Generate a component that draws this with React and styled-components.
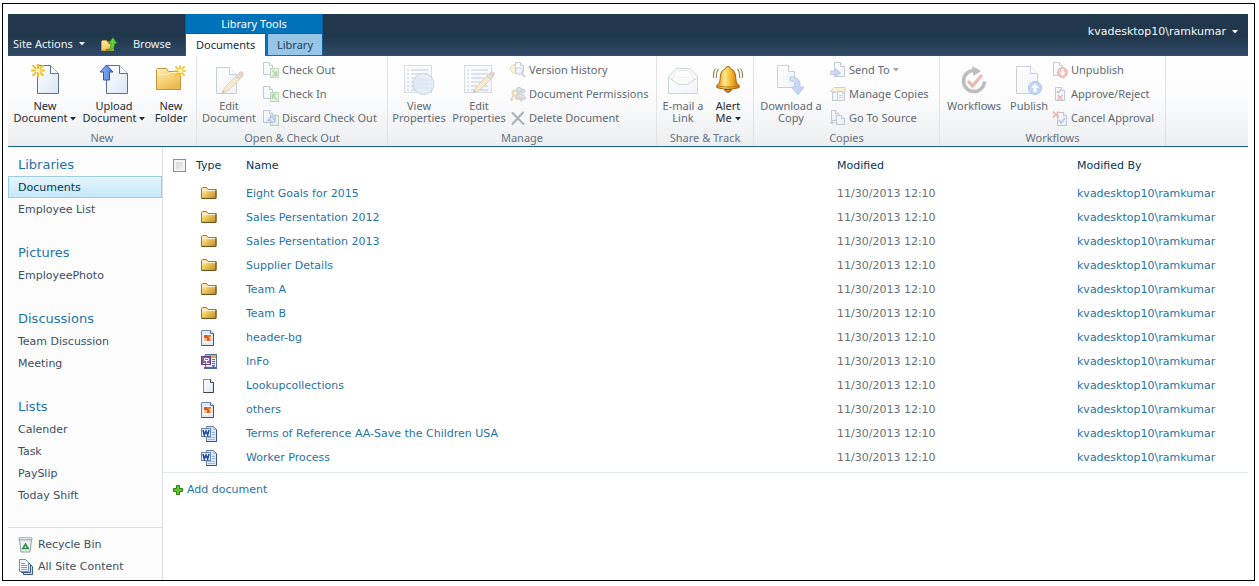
import React from "react";
import styled, { createGlobalStyle } from "styled-components";

const Global = createGlobalStyle`
  *, *::before, *::after { box-sizing: border-box; }
  body { margin: 0; background: #fff; font: 11px/22px Verdana, "DejaVu Sans", sans-serif; color: #3b4f65; }
  button { font: inherit; color: inherit; background: none; border: 0; padding: 0; margin: 0; cursor: pointer; }
  a { color: inherit; text-decoration: none; }
  a:hover { text-decoration: underline; }
  svg { display: block; flex: none; }
`;

const ribbonFont = `"Segoe UI", "Noto Sans", sans-serif`;

const Frame = styled.div`
  min-height: calc(100vh - 8px);
  margin: 3px 4px 5px 2px;
  padding: 10px 6px 0 5px;
  border: 1px solid #000;
  display: flex;
  flex-direction: column;
`;

const TopBar = styled.header`
  height: 42px;
  display: flex;
  align-items: flex-end;
  background: linear-gradient(#21374c 0%, #21374c 55%, #2f4a66 100%);
  border-bottom: 1px solid #1c5378;
  color: #fff;
  font-family: ${ribbonFont};
`;

const BarButtons = styled.div`
  flex: 0 0 168px;
  display: flex;
  align-items: center;
  justify-content: space-between;
`;

const BarButton = styled.button`
  height: 22px;
  padding: 0 5px;
  display: flex;
  align-items: center;
  gap: 6px;
  color: #eef2f6;
  white-space: nowrap;
`;

const ToolTabs = styled.div`
  width: 138px;
  margin: 0 0 -1px 9px;
  border: 1px solid #0b5c9a;
  border-width: 0 1px;
  align-self: stretch;
  background: #0072bc;
`;

const ToolTitle = styled.div`
  height: 20px;
  line-height: 19px;
  text-align: center;
  border-bottom: 1px solid #0a5d9b;
`;

const TabRow = styled.div`
  display: flex;
  justify-content: space-between;
  height: 22px;
`;

const Tab = styled.button`
  padding: 0 ${(p) => (p.$active ? 10 : 9)}px;
  height: ${(p) => (p.$active ? 22 : 21)}px;
  background: ${(p) => (p.$active ? "#fff" : "#97c5e6")};
  color: ${(p) => (p.$active ? "#1a2a3a" : "#22405c")};
`;

const UserMenu = styled.button`
  margin-left: auto;
  padding-right: 10px;
  align-self: stretch;
  height: 36px;
  display: flex;
  align-items: center;
  gap: 6px;
  color: #f4f7fa;
  font-family: Verdana, "DejaVu Sans", sans-serif;
`;

const Ribbon = styled.div`
  height: 91px;
  display: flex;
  background: linear-gradient(#fff 0%, #fcfcfd 45%, #eceef0 100%);
  border-bottom: 1px solid #17608d;
  font: 11px/12px ${ribbonFont};
`;

const Group = styled.section`
  flex: 0 0 ${(p) => p.$width}px;
  display: flex;
  flex-direction: column;
  padding-top: 2px;
  border-right: 1px solid #e0e3e6;
`;

const GroupBody = styled.div`
  display: flex;
  height: 72px;
`;

const GroupTitle = styled.div`
  text-align: center;
  line-height: 15px;
  color: #65717d;
`;

const BigButton = styled.button`
  flex: 0 0 ${(p) => p.$width}px;
  display: flex;
  flex-direction: column;
  align-items: center;
  justify-content: flex-start;
  gap: 4px;
  padding-top: 6px;
  white-space: nowrap;
  color: ${(p) => (p.disabled ? "#5f6973" : "#1e2a36")};
`;

const SmallList = styled.div`
  display: flex;
  flex-direction: column;
  padding-left: 2px;
`;

const SmallButton = styled.button`
  height: 24px;
  display: flex;
  align-items: center;
  gap: 3px;
  white-space: nowrap;
  color: #5f6973;
`;

const Faded = styled.span`
  opacity: ${(p) => (p.$on ? 0.36 : 1)};
`;

const CaretSvg = styled.svg`
  display: inline-block;
  vertical-align: middle;
`;

const Main = styled.div`
  flex: 1;
  display: flex;
`;

const Sidebar = styled.nav`
  flex: 0 0 155px;
  padding-top: 6px;
  background: #fcfcfc;
  border-right: 1px solid #d9dfe3;
`;

const NavSection = styled.section`
  margin-bottom: 21px;
`;

const NavTitle = styled.h2`
  margin: 0;
  padding-left: 10px;
  font-size: 13px;
  line-height: 23px;
  font-weight: 400;
  color: #1f73ac;
`;

const NavLink = styled.a`
  display: block;
  height: 22px;
  padding: 1px 0 0 10px;
  line-height: 22px;
  ${(p) =>
    p.$selected &&
    `
    padding-left: 9px;
    line-height: 20px;
    border: 1px solid #a0cbe4;
    color: #003759;
    background: linear-gradient(#e6f5fc, #c6e8fa);
  `}
`;

const NavFooter = styled.div`
  padding: 6px 0 2px 10px;
  border-top: 1px solid #d9dfe3;
`;

const FooterLink = styled.a`
  display: flex;
  align-items: center;
  gap: 4px;
  height: 22px;
`;

const Content = styled.main`
  flex: 1;
`;

const Table = styled.table`
  width: 100%;
  table-layout: fixed;
  border-collapse: collapse;
  th, td { padding: 0; text-align: left; font-weight: 400; white-space: nowrap; }
  th { padding-top: 2px; }
  thead tr { height: 35px; color: #003759; }
  tbody tr { height: 24px; }
`;

const Col = styled.col`
  width: ${(p) => (p.$width ? `${p.$width}px` : "auto")};
`;

const TypeCell = styled.td`
  svg { margin-left: 5px; }
`;

const LinkCell = styled.td`
  color: #1f73ac;
`;

const DateCell = styled.td`
  color: #6c7073;
`;

const Check = styled.input`
  appearance: none;
  display: block;
  width: 13px;
  height: 13px;
  margin: 0 0 0 10px;
  border: 1px solid #8b8f94;
  background: linear-gradient(135deg, #cdd0d5, #f6f6f6);
  box-shadow: inset 0 0 0 2px #f4f4f4;
`;

const AddRow = styled.div`
  margin-top: 2px;
  padding: 6px 10px;
  border-top: 1px solid #e3e8eb;
`;

const AddLink = styled.a`
  display: inline-flex;
  align-items: center;
  gap: 4px;
  color: #1f73ac;
`;

const Caret = ({ color = "currentColor" }) => (
  <CaretSvg width="6" height="4" viewBox="0 0 6 4" aria-hidden="true">
    <path d="M0 0h6L3 3.5z" fill={color} />
  </CaretSvg>
);

const Svg = ({ size, children }) => (
  <svg width={size} height={size} viewBox={`0 0 ${size} ${size}`} fill="none" aria-hidden="true">
    {children}
  </svg>
);

const DefsSvg = styled.svg`
  position: absolute;
`;

const Gradients = () => (
  <DefsSvg width="0" height="0" aria-hidden="true">
    <defs>
      <linearGradient id="paper" x1="0" y1="0" x2="1" y2="1">
        <stop offset="0" stopColor="#fff" />
        <stop offset="1" stopColor="#d9e6f6" />
      </linearGradient>
      <linearGradient id="gold" x1="0" y1="0" x2="0.6" y2="1">
        <stop offset="0" stopColor="#fff0b0" />
        <stop offset="0.5" stopColor="#f9d67c" />
        <stop offset="1" stopColor="#eab94f" />
      </linearGradient>
      <linearGradient id="bell" x1="0" y1="0" x2="1" y2="0">
        <stop offset="0" stopColor="#d98a10" />
        <stop offset="0.35" stopColor="#ffe98a" />
        <stop offset="0.65" stopColor="#f6b52c" />
        <stop offset="1" stopColor="#b96a08" />
      </linearGradient>
      <linearGradient id="blue" x1="0" y1="0" x2="1" y2="0">
        <stop offset="0" stopColor="#8fb4f4" />
        <stop offset="1" stopColor="#4d7fe0" />
      </linearGradient>
      <linearGradient id="tray" x1="0" y1="0" x2="1" y2="1">
        <stop offset="0" stopColor="#fff6c8" />
        <stop offset="0.45" stopColor="#efc95c" />
        <stop offset="1" stopColor="#b88528" />
      </linearGradient>
    </defs>
  </DefsSvg>
);

const Star = ({ x, y, s = 1 }) => (
  <g transform={`translate(${x} ${y}) scale(${s})`} stroke="#f0c020" strokeWidth="2" strokeLinecap="round">
    <path d="M0-6V-3M0 3V6M-6 0h3M3 0H6M-4.8-4.8l2.400 2.400M2.400 2.400l2.400 2.400M4.800-4.800L2.400-2.400M-2.400 2.400l-2.400 2.400" />
    <circle r="2" fill="#fff3a8" stroke="none" />
  </g>
);

const Page = ({ x, y, w, h, c = 6, stroke = "#5a7394" }) => (
  <>
    <path d={`M${x} ${y}h${w - c}l${c} ${c}v${h - c}h${-w}z`} fill="url(#paper)" stroke={stroke} />
    <path d={`M${x + w - c} ${y}v${c}h${c}`} fill="#fff" stroke={stroke} />
  </>
);

const Pencil = () => (
  <g>
    <path d="M9 29l3-6L25 10l4 3-13 13z" fill="#f2c877" stroke="#a0753a" strokeWidth=".8" />
    <path d="M25 10l2-2c2-1 4 1 3 3l-1 2z" fill="#d8746c" stroke="#8d6a5a" strokeWidth=".7" />
    <path d="M23 12l4 3" stroke="#7c8894" strokeWidth="1.6" />
    <path d="M9 29l1.300-2.600 1.500 1.200z" fill="#444" />
  </g>
);

const FormPage = () => (
  <>
    <rect x="1.500" y="1.500" width="27" height="27" fill="url(#paper)" stroke="#93a5bf" />
    {[6, 10, 14, 18, 22, 26].map((y) => (
      <path key={y} d={`M4 ${y}h2M8 ${y}h17`} stroke="#5a6e9c" />
    ))}
  </>
);

const icons = {
  newDoc: (
    <Svg size={32}><Page x={8.5} y={1.5} w={21} h={28} c={8} /><Star x={9} y={6.5} /></Svg>
  ),
  upload: (
    <Svg size={32}>
      <Page x={8.5} y={1.5} w={21} h={28} c={8} />
      <path d="M8.500 1l6.500 7h-3.500v8h-6V8H2z" fill="url(#blue)" stroke="#2f55a5" />
    </Svg>
  ),
  newFolder: (
    <Svg size={32}>
      <path d="M1.500 25.500v-20l1-1h9l2 3h12v18z" fill="url(#gold)" stroke="#c4953c" />
      <path d="M2 10.500h11l2-2h11" stroke="#fff2c0" />
      <Star x={25} y={7} s={0.85} />
    </Svg>
  ),
  editDoc: <Svg size={32}><Page x={3.5} y={3.5} w={20} h={26} c={7} stroke="#6c7c90" /><Pencil /></Svg>,
  viewProps: (
    <Svg size={32}>
      <FormPage />
      <circle cx="20.500" cy="20" r="10.500" fill="#b9d2f2" fillOpacity=".85" stroke="#7c8ea8" />
      <path d="M12 16h17M11 20h19M12 24h17" stroke="#8fabdf" />
    </Svg>
  ),
  editProps: <Svg size={32}><FormPage /><g transform="translate(1 0)"><Pencil /></g></Svg>,
  mail: (
    <Svg size={32}>
      <path d="M1.500 12.500L9 4.500h14l7.500 8v17h-29z" fill="#eef4fb" stroke="#7a96b4" />
      <path d="M5 16l5-9.500h12L27 16l-8 6h-6z" fill="#fff" stroke="#d8cfa2" />
      <path d="M9 13.500h14M9 16h14" stroke="#f0e2a0" />
      <path d="M1.500 13.500L12 20.500h8l10.500-7v16h-29z" fill="url(#paper)" stroke="#7a96b4" />
    </Svg>
  ),
  bell: (
    <Svg size={32}>
      <path d="M16 2.500c1.800 0 2.300 1 2.300 2.200 4.200 1.200 5.200 4.600 5.500 9 .300 4.600 1.300 6.200 3.400 7.600v2.200c-6 2.200-16.400 2.200-22.400 0v-2.200c2.100-1.400 3.100-3 3.400-7.600.3-4.400 1.300-7.800 5.500-9 0-1.200.5-2.200 2.300-2.200z" fill="url(#bell)" stroke="#a56508" />
      <path d="M5 21.500c6 2 16 2 22 0" stroke="#b87610" />
      <path d="M12.500 25.500c.8 3.600 6.200 3.600 7 0z" fill="#d88b14" stroke="#8b5106" />
      <path d="M6.500 5C4.500 7 4 10 4.500 14M3.500 4.500C1.500 7 1 10.500 1.800 14M25.500 5c2 2 2.500 5 2 9M28.500 4.500c2 2.500 2.500 6 1.700 9.500" stroke="#a88650" strokeWidth="1.200" />
    </Svg>
  ),
  download: (
    <Svg size={32}>
      <Page x={2.5} y={1.5} w={17} h={22} c={6} stroke="#6c83a4" />
      <path d="M15 13c8-1 10.500 4 10 10h4l-6 8-6.500-8h4c.500-4-1.500-6-5.500-6z" fill="url(#blue)" stroke="#4d6fb5" />
    </Svg>
  ),
  workflow: (
    <Svg size={32}>
      <path d="M17 6.500a10.500 10.500 0 1 0 9.500 11" stroke="#4a4e54" strokeWidth="3.600" />
      <path d="M14 2l9 5-7.500 5z" fill="#4a4e54" />
      <path d="M10 17l4.500 5L24 11" stroke="#dc3c30" strokeWidth="3.200" />
    </Svg>
  ),
  publish: (
    <Svg size={32}>
      <Page x={3.5} y={2.5} w={21} h={27} c={7} stroke="#6c83a4" />
      <circle cx="22" cy="24" r="6.500" fill="#5798e6" stroke="#2e62ae" />
      <path d="M22 19.500l4 4.500h-2.500v4h-3v-4H18z" fill="#fff" />
    </Svg>
  ),
  checkOut: (
    <Svg size={16}>
      <Page x={0.5} y={0.5} w={9} h={12} c={3} />
      <rect x="7.500" y="6.500" width="8" height="9" fill="#bde6b2" stroke="#4b9c46" />
      <path d="M9.500 8.500l4 4.500M13.500 9v4.500H9.500" stroke="#2f8d2b" strokeWidth="1.600" />
    </Svg>
  ),
  checkIn: (
    <Svg size={16}>
      <Page x={0.5} y={0.5} w={9} h={12} c={3} />
      <rect x="7.500" y="6.500" width="8" height="9" fill="#bde6b2" stroke="#4b9c46" />
      <path d="M13.500 13.500l-4-4.500M13.500 8.500H9.500V13" stroke="#2f8d2b" strokeWidth="1.600" />
    </Svg>
  ),
  discard: (
    <Svg size={16}>
      <Page x={0.5} y={0.5} w={9} h={12} c={3} />
      <rect x="7.500" y="5.500" width="8" height="10" fill="#cdeac6" stroke="#4b9c46" />
      <path d="M12 4.500v6c0 2.500-4 2.500-4.500 0H5L8.500 6l3 4" stroke="#4a7ed0" strokeWidth="1.600" />
    </Svg>
  ),
  version: (
    <Svg size={16}>
      <circle cx="5" cy="7" r="4.500" fill="#f6dd98" stroke="#b8913c" />
      <Page x={5.5} y={0.5} w={8} h={10} c={3} />
      <circle cx="9" cy="9" r="3.500" fill="#d6e6f8" fillOpacity=".8" stroke="#5b7aa6" />
      <path d="M11.500 11.500L15 15" stroke="#7a8797" strokeWidth="2" />
    </Svg>
  ),
  perms: (
    <Svg size={16}>
      <circle cx="9" cy="4" r="2.500" fill="#9db5cf" stroke="#55708f" />
      <circle cx="13" cy="5" r="2" fill="#9db5cf" stroke="#55708f" />
      <path d="M5.500 13c0-7 9-7 10 0z" fill="#9db5cf" stroke="#55708f" />
      <circle cx="5" cy="7" r="2.500" stroke="#bd932b" strokeWidth="1.800" />
      <path d="M4.500 9L1 13.500l1.500 1M8 10l3 5 1.500-1.500" stroke="#bd932b" strokeWidth="1.600" />
    </Svg>
  ),
  del: (
    <Svg size={16}>
      <path d="M2.500 3l11 11M13 2.500L2.500 14" stroke="#33383d" strokeWidth="2" strokeLinecap="round" />
    </Svg>
  ),
  sendTo: (
    <Svg size={16}>
      <Page x={4.5} y={0.5} w={10} h={14} c={4} />
      <path d="M.500 9h5V6.500l5 4.500-5 4v-2.500h-5z" fill="url(#blue)" stroke="#4467b4" strokeWidth=".8" />
    </Svg>
  ),
  manage: (
    <Svg size={16}>
      <path d="M.500 5.500L4 1.500h11v5l-4 1z" fill="url(#gold)" stroke="#b18a35" />
      <Page x={2.5} y={6.5} w={7} h={8} c={2} />
      <Page x={7.5} y={5.5} w={7} h={9} c={2} />
      <path d="M9 9.500h4M9 11.500h4" stroke="#6a86b0" />
    </Svg>
  ),
  source: (
    <Svg size={16}>
      <Page x={1.5} y={0.5} w={7} h={10} c={3} />
      <Page x={6.5} y={5.5} w={8} h={9} c={3} />
      <path d="M1 12.500h4M3 10.500l-2.500 2 2.500 2" stroke="#5878a8" />
    </Svg>
  ),
  unpublish: (
    <Svg size={16}>
      <Page x={1.5} y={0.5} w={9} h={13} c={3} />
      <circle cx="10.500" cy="10.500" r="5" fill="#e8604c" stroke="#b03a2a" />
      <path d="M10.500 14l-3-3.500h2V7h2v3.500h2z" fill="#fff" />
    </Svg>
  ),
  approve: (
    <Svg size={16}>
      <Page x={3.5} y={1.5} w={9} h={13} c={3} />
      <path d="M5 5l1.500 2L9 3.500" stroke="#3d6cc0" strokeWidth="1.300" />
      <path d="M5.500 9l5 5M10.500 9l-5 5" stroke="#dc3c30" strokeWidth="1.700" />
    </Svg>
  ),
  cancel: (
    <Svg size={16}>
      <Page x={5.5} y={2.5} w={9} h={13} c={3} />
      <path d="M7 10l2 3 4-5" stroke="#3d6cc0" strokeWidth="1.600" />
      <path d="M1 1.500l6 6M7 1.500l-6 6" stroke="#dc3c30" strokeWidth="1.700" />
    </Svg>
  ),
};

const fileIcons = {
  folder: (
    <Svg size={16}>
      <path d="M.500 12.500V2.500l1-1h4l1.500 2h8v9z" fill="url(#tray)" stroke="#9a7b35" />
      <path d="M1.500 4.500h13" stroke="#fff6cf" />
      <path d="M.500 12.500h14.500v-9" stroke="#6b541d" />
    </Svg>
  ),
  image: (
    <Svg size={16}>
      <path d="M.500.500h9l3 3v12h-12z" fill="#dfe8f6" stroke="#6d85b2" />
      <path d="M9.500.500v3h3" fill="#fff" stroke="#4b659a" />
      <path d="M2 4h9v9H2z" fill="#f3f5fa" />
      <path d="M3 5h3v3H3z" fill="#d9532a" />
      <path d="M6 5h4v2H6z" fill="#e9792f" />
      <path d="M3 8h3v3H3z" fill="#f6c48a" />
      <path d="M6 7h2v4H6z" fill="#d9532a" />
      <path d="M8 8h2v3H8z" fill="#f3a04a" />
      <path d="M.500 15.500h12v-12" stroke="#3f5688" />
    </Svg>
  ),
  infopath: (
    <Svg size={16}>
      <rect x="4.500" y=".500" width="11" height="14" fill="#e8eefa" stroke="#56719f" />
      <path d="M3 1h12v3H3z" fill="#f0a63a" />
      <path d="M11 5.500h3M11 7.500h3M11 9.500h3M11 11.500h3" stroke="#5572a8" />
      <rect x=".500" y="2.500" width="9" height="8" fill="#8a5ca0" stroke="#6a3f80" />
      <path d="M3.500 4.500h4v2h-4zM5.500 6.500v3h3M2 9.500h2" stroke="#fff" />
      <path d="M3 14h12.500M12.500 12v3" stroke="#4a66a4" strokeWidth="2" />
    </Svg>
  ),
  page: (
    <Svg size={16}>
      <path d="M2.500 1.500h7l3 3v10h-10z" fill="url(#paper)" stroke="#818892" />
      <path d="M9.500 1.500v3h3" fill="#fff" stroke="#3f454e" />
      <path d="M2.500 14.500h10v-10" stroke="#40464f" />
    </Svg>
  ),
  word: (
    <Svg size={16}>
      <path d="M5.500.500h7l3 3v12h-10z" fill="#dce8f9" stroke="#5f7cb2" />
      <path d="M12.500.500v3h3M11 6.500h3M11 8.500h3M7 11.500h7M7 13.500h7" stroke="#a0b5da" />
      <path d="M5 15.500h10.500v-12" stroke="#365494" />
      <rect x=".500" y="2.500" width="9" height="8" fill="#f3f7fd" stroke="#6584be" />
      <path d="M2 4l1.300 5L5 5l1.700 4L8 4" stroke="#254b98" strokeWidth="1.600" />
    </Svg>
  ),
};

const UpFolder = () => (
  <Svg size={16}>
    <path d="M.500 14.500V5.500l1-1h4l1 1.500h6v8.500z" fill="url(#gold)" stroke="#c79a3c" />
    <path d="M5 13.500c4 .500 5-2 5-6H7.500L12 1.500l4 6h-2.500c0 6-4 8-8.500 6z" fill="#63cf3a" stroke="#2c8c1c" strokeWidth=".8" />
  </Svg>
);

const BinIcon = () => (
  <Svg size={16}>
    <path d="M1.500 2.500h12l-1.500 12.500H3z" fill="#edf2f1" stroke="#8d9c9f" />
    <path d="M1 .800h13v2H1z" fill="#fff" stroke="#7d8d90" strokeWidth=".8" />
    <path d="M7.500 7l2.700 4.500H4.800z" fill="#cfe6d5" stroke="#318d4e" strokeWidth="1.500" />
  </Svg>
);

const PagesIcon = () => (
  <Svg size={16}>
    <path d="M5.500 4.500h6l3 3v8h-9z" fill="#cfdcf0" stroke="#3b5784" />
    <path d="M3.500 2.500h6l3 3v8h-9z" fill="#dfe9f7" stroke="#3b5784" />
    <path d="M1.500.500h6l3 3v9h-9z" fill="#f5f9fe" stroke="#6f8ab5" />
    <path d="M3 4.500h4M3 6.500h6M3 8.500h6M3 10.500h6" stroke="#7d9ac6" />
  </Svg>
);

const PlusIcon = () => (
  <Svg size={10}>
    <path d="M3.500.500h3v3h3v3h-3v3h-3v-3h-3v-3h3z" fill="#5fc92e" stroke="#2b8510" />
  </Svg>
);

const groups = [
  {
    title: "New", width: 189,
    big: [
      { icon: "newDoc", lines: ["New", "Document"], width: 74, menu: true },
      { icon: "upload", lines: ["Upload", "Document"], width: 64, menu: true },
      { icon: "newFolder", lines: ["New", "Folder"], width: 50 },
    ],
    small: [],
  },
  {
    title: "Open & Check Out", width: 191,
    big: [{ icon: "editDoc", lines: ["Edit", "Document"], width: 64, off: true }],
    small: [["checkOut", "Check Out"], ["checkIn", "Check In"], ["discard", "Discard Check Out"]],
  },
  {
    title: "Manage", width: 269,
    big: [
      { icon: "viewProps", lines: ["View", "Properties"], width: 62, off: true },
      { icon: "editProps", lines: ["Edit", "Properties"], width: 58, off: true },
    ],
    small: [["version", "Version History"], ["perms", "Document Permissions"], ["del", "Delete Document"]],
  },
  {
    title: "Share & Track", width: 97,
    big: [
      { icon: "mail", lines: ["E-mail a", "Link"], width: 52, off: true },
      { icon: "bell", lines: ["Alert", "Me"], width: 38, menu: true },
    ],
    small: [],
  },
  {
    title: "Copies", width: 186,
    big: [{ icon: "download", lines: ["Download a", "Copy"], width: 74, off: true }],
    small: [["sendTo", "Send To", true], ["manage", "Manage Copies"], ["source", "Go To Source"]],
  },
  {
    title: "Workflows", width: 226,
    big: [
      { icon: "workflow", lines: ["Workflows"], width: 68, off: true },
      { icon: "publish", lines: ["Publish"], width: 42, off: true },
    ],
    small: [["unpublish", "Unpublish"], ["approve", "Approve/Reject"], ["cancel", "Cancel Approval"]],
  },
];

const navigation = [
  ["Libraries", ["Documents", "Employee List"]],
  ["Pictures", ["EmployeePhoto"]],
  ["Discussions", ["Team Discussion", "Meeting"]],
  ["Lists", ["Calender", "Task", "PaySlip", "Today Shift"]],
];

const files = [
  ["folder", "Eight Goals for 2015"],
  ["folder", "Sales Persentation 2012"],
  ["folder", "Sales Persentation 2013"],
  ["folder", "Supplier Details"],
  ["folder", "Team A"],
  ["folder", "Team B"],
  ["image", "header-bg"],
  ["infopath", "InFo"],
  ["page", "Lookupcollections"],
  ["image", "others"],
  ["word", "Terms of Reference AA-Save the Children USA"],
  ["word", "Worker Process"],
];

const RibbonGroup = ({ title, width, big, small }) => (
  <Group $width={width} aria-label={title}>
    <GroupBody>
      {big.map((b) => (
        <BigButton key={b.icon} $width={b.width} disabled={b.off}>
          <Faded $on={b.off}>{icons[b.icon]}</Faded>
          <span>
            {b.lines[0]}
            {b.lines[1] && <br />}
            {b.lines[1]} {b.menu && <Caret />}
          </span>
        </BigButton>
      ))}
      {small.length > 0 && (
        <SmallList>
          {small.map(([icon, label, menu]) => (
            <SmallButton key={icon} disabled>
              <Faded $on>{icons[icon]}</Faded>
              {label}
              {menu && <Caret color="#a0a6ac" />}
            </SmallButton>
          ))}
        </SmallList>
      )}
    </GroupBody>
    <GroupTitle>{title}</GroupTitle>
  </Group>
);

export default function App() {
  return (
    <Frame>
      <Global />
      <Gradients />
      <TopBar>
        <BarButtons>
          <BarButton>Site Actions <Caret /></BarButton>
          <BarButton aria-label="Navigate up"><UpFolder /></BarButton>
          <BarButton>Browse</BarButton>
        </BarButtons>
        <ToolTabs>
          <ToolTitle>Library Tools</ToolTitle>
          <TabRow>
            <Tab $active>Documents</Tab>
            <Tab>Library</Tab>
          </TabRow>
        </ToolTabs>
        <UserMenu>
          kvadesktop10\ramkumar <Caret />
        </UserMenu>
      </TopBar>
      <Ribbon>
        {groups.map((g) => (
          <RibbonGroup key={g.title} {...g} />
        ))}
      </Ribbon>
      <Main>
        <Sidebar>
          {navigation.map(([title, items]) => (
            <NavSection key={title}>
              <NavTitle><a href="#">{title}</a></NavTitle>
              {items.map((item) => (
                <NavLink key={item} href="#" $selected={item === "Documents"}>{item}</NavLink>
              ))}
            </NavSection>
          ))}
          <NavFooter>
            <FooterLink href="#"><BinIcon />Recycle Bin</FooterLink>
            <FooterLink href="#"><PagesIcon />All Site Content</FooterLink>
          </NavFooter>
        </Sidebar>
        <Content>
          <Table>
            <colgroup>
              <Col $width={33} />
              <Col $width={50} />
              <Col />
              <Col $width={240} />
              <Col $width={171} />
            </colgroup>
            <thead>
              <tr>
                <th><Check type="checkbox" aria-label="Select all" /></th>
                <th>Type</th>
                <th>Name</th>
                <th>Modified</th>
                <th>Modified By</th>
              </tr>
            </thead>
            <tbody>
              {files.map(([type, name]) => (
                <tr key={name}>
                  <td />
                  <TypeCell>{fileIcons[type]}</TypeCell>
                  <LinkCell><a href="#">{name}</a></LinkCell>
                  <DateCell>11/30/2013 12:10</DateCell>
                  <LinkCell><a href="#">kvadesktop10\ramkumar</a></LinkCell>
                </tr>
              ))}
            </tbody>
          </Table>
          <AddRow>
            <AddLink href="#"><PlusIcon />Add document</AddLink>
          </AddRow>
        </Content>
      </Main>
    </Frame>
  );
}
